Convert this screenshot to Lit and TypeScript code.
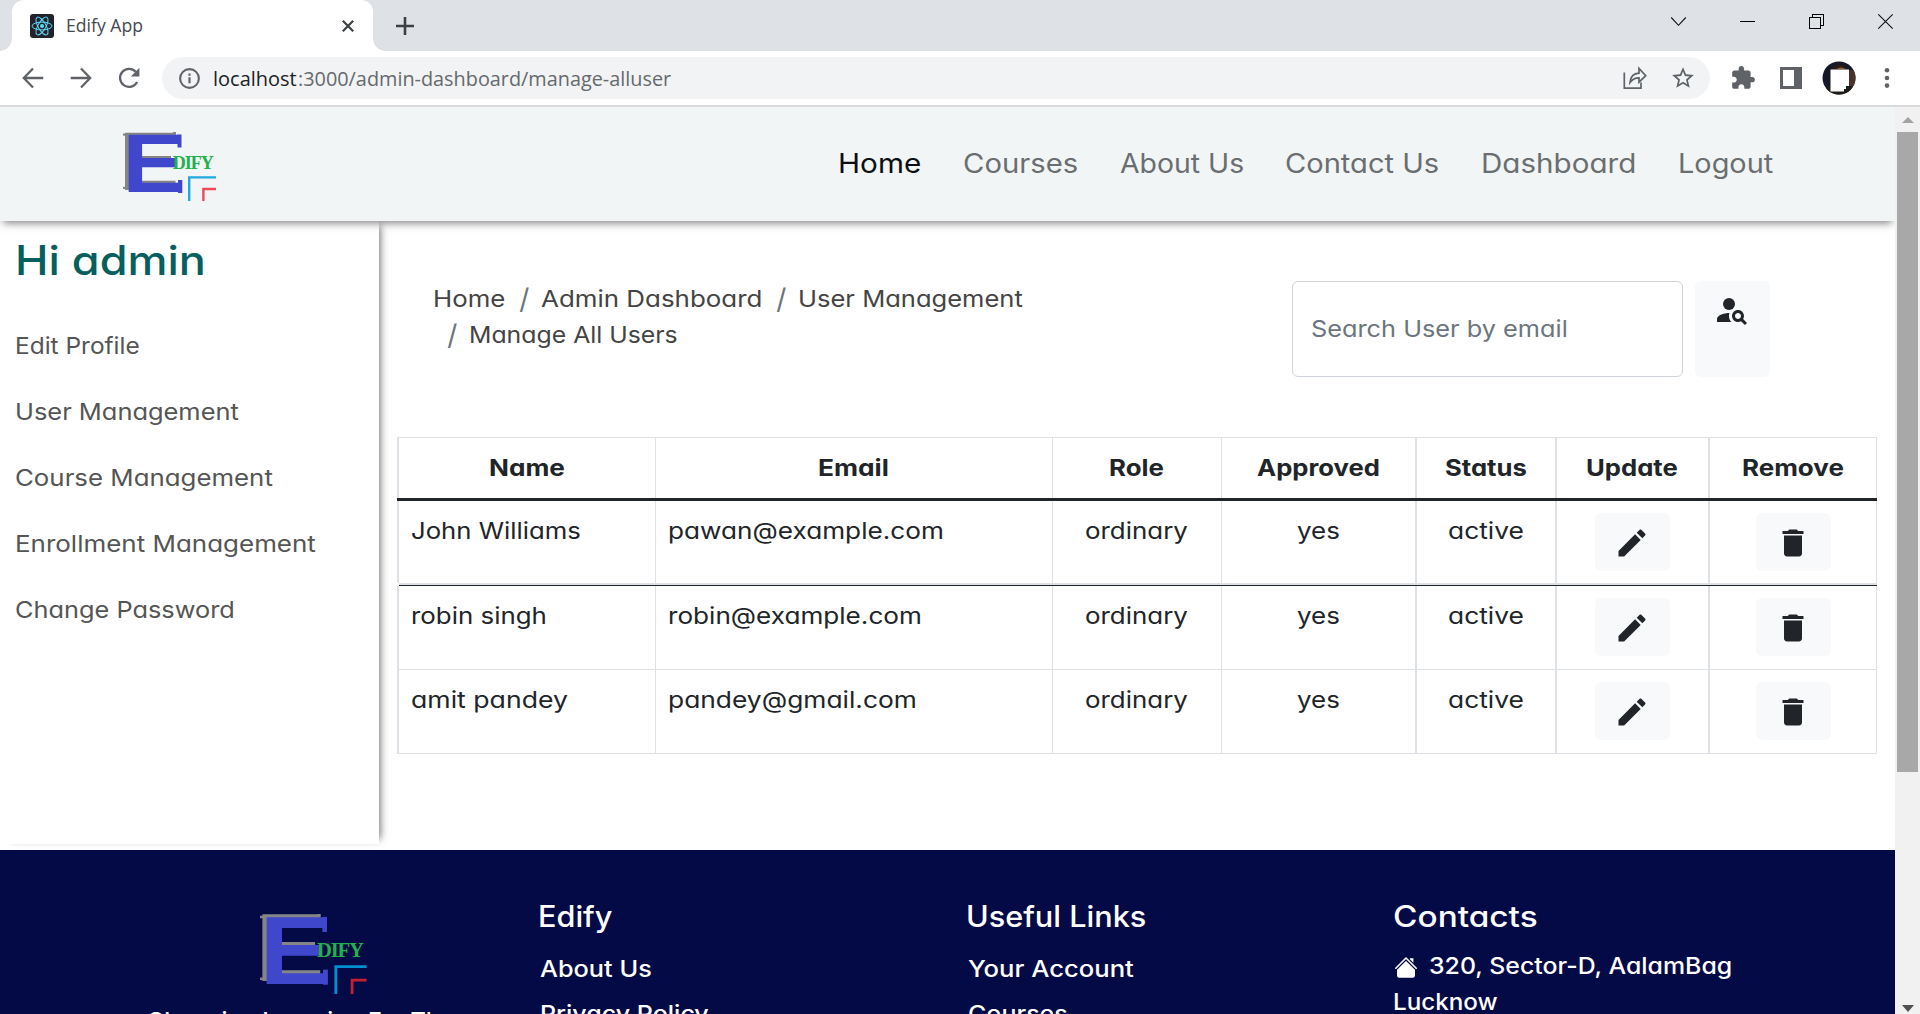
import { LitElement, html, css, svg, nothing } from "lit";
import { customElement, property } from "lit/decorators.js";

/** A single line of text widened (or narrowed) so that its ink fills `w` pixels. */
@customElement("fit-text")
class FitText extends LitElement {
  @property({ type: Number }) w = 0;
  @property() text = "";

  static styles = css`
    :host { display: inline-block; white-space: pre; flex: none; }
    .ink { display: inline-block; transform-origin: 0 50%; margin-left: -0.06em; }
  `;

  render() {
    return html`<span class="ink">${this.text}</span>`;
  }

  updated() {
    const span = this.renderRoot.querySelector(".ink") as HTMLElement;
    this.style.width = `${this.w}px`;
    span.style.transform = "none";
    const em = parseFloat(getComputedStyle(span).fontSize);
    const natural = span.getBoundingClientRect().width;
    if (this.text.length > 1) {
      span.style.transform = `scaleX(${(this.w - 1) / (natural - 0.11 * em)})`;
    }
  }
}

/** The Edify logo: a shadowed E with slab ends, the rest of the name and two corner marks. */
@customElement("edify-logo")
class EdifyLogo extends LitElement {
  static styles = css`
    :host { display: block; --sky: #1fa9e1; --rose: #ee4b55; }
    .art { display: block; width: 100%; height: 100%; overflow: visible; }
    .letter { font: bold 83px "Liberation Sans", sans-serif; }
    .back { fill: #858585; }
    .front { fill: #3f48cc; }
    .rest { font: bold 18px "Liberation Serif", serif; fill: #22b14c; }
    .sky { fill: none; stroke: var(--sky); stroke-width: 2.4; }
    .rose { fill: none; stroke: var(--rose); stroke-width: 2.4; }
  `;
  render() {
    return html`<svg class="art" viewBox="0 0 93 69" preserveAspectRatio="none">
      <text class="letter back" x="-4" y="57.5" textLength="60" lengthAdjust="spacingAndGlyphs">E</text>
      <rect class="back" x="0" y="1.5" width="5" height="2.2" />
      <rect class="back" x="0" y="54.8" width="5" height="2.2" />
      <rect class="back" x="50" y="0" width="3" height="4" />
      <text class="letter front" x="-0.5" y="60" textLength="62" lengthAdjust="spacingAndGlyphs">E</text>
      <rect class="front" x="54.5" y="2.5" width="4" height="13" />
      <rect class="front" x="55" y="48" width="4.3" height="13" />
      <text class="rest" x="49.7" y="36.7" textLength="41" lengthAdjust="spacing">DIFY</text>
      <path class="sky" d="M66.2 69V45.4H93" />
      <path class="rose" d="M80.4 69V57H93" />
    </svg>`;
  }
}

const strokeIcon = (size: number, body: unknown) =>
  html`<svg class="stroke" width=${size} height=${size} viewBox="0 0 24 24">${body}</svg>`;

@customElement("browser-bar")
class BrowserBar extends LitElement {
  static styles = css`
    :host { display: block; flex: none; font-family: "Open Sans", "Noto Sans", sans-serif; color: #3c4043; }
    svg { display: block; flex: none; overflow: visible; }
    .strip { display: flex; height: 51px; background: #dee1e6; padding-left: 12px; }
    .tab { position: relative; box-sizing: border-box; width: 361px; height: 51px; background: #fff;
      border-radius: 12px 12px 0 0; display: flex; align-items: center; padding: 1px 19px 0 18px; }
    .flare { position: absolute; bottom: 0; width: 12px; height: 12px; }
    .flare.left { left: -12px; background: radial-gradient(circle at 0 0, transparent 11.5px, #fff 12px); }
    .flare.right { right: -12px; background: radial-gradient(circle at 100% 0, transparent 11.5px, #fff 12px); }
    .title { font-size: 18.5px; line-height: 26px; margin-left: 13px; flex: 1; padding-bottom: 2px; color: #45484d; }
    .plus { margin: 17px 0 0 23px; }
    .controls { margin-left: auto; display: flex; gap: 54px; padding: 14px 27px 0 0; }
    .thin { fill: none; stroke: #000; stroke-width: 1; shape-rendering: crispEdges; }
    .diag { fill: none; stroke: #111; stroke-width: 1.1; }
    .tools { display: flex; align-items: center; height: 54px; background: #fff; border-bottom: 2px solid #d9dadc;
      box-sizing: content-box; padding-left: 20px; }
    .stroke { fill: none; stroke: #5f6368; stroke-width: 2.1; }
    .arrows { display: flex; gap: 22px; width: 142px; }
    .omni { width: 1548px; height: 42px; box-sizing: border-box; border-radius: 21px; background: #f1f3f4;
      display: flex; align-items: center; padding: 0 14px 0 15px; }
    .url { font-size: 20.5px; line-height: 28px; margin-left: 12.5px; color: #66696d; flex: 1; display: flex; gap: 2px; }
    .host { color: #202124; }
    .omni-icons { display: flex; gap: 23px; align-items: center; }
    .right { display: flex; align-items: center; margin-left: 20px; }
    .side { margin-left: 24px; }
    .face { margin-left: 20px; }
    .more { margin-left: 28px; }
  `;
  render() {
    return html`
      <div class="strip">
        <div class="tab">
          <span class="flare left"></span><span class="flare right"></span>
          <svg width="24" height="24" viewBox="0 0 24 24">
            <rect width="24" height="24" rx="3" fill="#20232a" />
            <g fill="none" stroke="#61dafb" stroke-width="1">
              <ellipse cx="12" cy="12" rx="10" ry="3.9" />
              <ellipse cx="12" cy="12" rx="10" ry="3.9" transform="rotate(60 12 12)" />
              <ellipse cx="12" cy="12" rx="10" ry="3.9" transform="rotate(120 12 12)" />
            </g>
            <circle cx="12" cy="12" r="2" fill="#61dafb" />
          </svg>
          <div class="title"><fit-text .w=${76} .text=${"Edify App"}></fit-text></div>
          <svg width="12" height="12" viewBox="0 0 12 12"><path d="M.8.8L11.2 11.2M11.2.8L.8 11.2" stroke="#3c4043" stroke-width="2.2" /></svg>
        </div>
        <svg class="plus" width="18" height="18" viewBox="0 0 18 18"><path d="M9 0v18M0 9h18" stroke="#3c4043" stroke-width="2.6" /></svg>
        <div class="controls">
          <svg width="16" height="15" viewBox="0 0 16 15"><path class="diag" d="M1.2 3.5L8.5 11.3L15.8 3.5" /></svg>
          <svg width="15" height="15" viewBox="0 0 15 15"><path class="thin" d="M0 7.5H15" /></svg>
          <svg width="15" height="15" viewBox="0 0 15 15"><path class="thin" d="M.5 3.5h11v11h-11zM3.5 3.5V.5h11v11h-3" /></svg>
          <svg width="15" height="15" viewBox="0 0 15 15"><path class="diag" d="M.3.3L14.7 14.7M14.7.3L.3 14.7" /></svg>
        </div>
      </div>
      <div class="tools">
        <div class="arrows">
          ${strokeIcon(26, svg`<path d="M21.5 12H4M12 3.3L3.5 12L12 20.7" />`)}
          ${strokeIcon(26, svg`<path d="M2.5 12H20M12 3.3L20.5 12L12 20.7" />`)}
          ${strokeIcon(26, svg`<path d="M19.5 15.6A8.3 8.3 0 1 1 18.2 6.3" /><path d="M21.6 2.6V10.5H13.7z" fill="#5f6368" stroke="none" />`)}
        </div>
        <div class="omni">
          ${strokeIcon(25, svg`<circle cx="12" cy="12" r="9" stroke-width="2" /><path d="M12 10.8v5.7M12 7.2v2.1" stroke-width="2.1" />`)}
          <div class="url">
            <fit-text class="host" .w=${82.5} .text=${"localhost"}></fit-text><fit-text .w=${372} .text=${":3000/admin-dashboard/manage-alluser"}></fit-text>
          </div>
          <div class="omni-icons">
            <svg width="24" height="24" viewBox="0 0 24 24"><path d="M1.3 6.5V22.2H18V16.5M7 16.5C7.5 10.5 10.5 7.5 16 7.2V2.5L22.7 9.7L16 16.2V11.9C12 11.9 9.5 13 7 16.5z" fill="none" stroke="#5f6368" stroke-width="1.7" /></svg>
            <svg width="26" height="26" viewBox="0 0 24 24"><path fill="#5f6368" d="M22 9.24l-7.19-.62L12 2 9.19 8.63 2 9.24l5.46 4.73L5.82 21 12 17.27 18.18 21l-1.63-7.03L22 9.24zM12 15.4l-3.76 2.27 1-4.28-3.32-2.88 4.38-.38L12 6.1l1.71 4.04 4.38.38-3.32 2.88 1 4.28L12 15.4z" /></svg>
          </div>
        </div>
        <div class="right">
          <svg width="26" height="26" viewBox="0 0 24 24"><path fill="#5f6368" d="M20.5 11H19V7c0-1.1-.9-2-2-2h-4V3.5C13 2.12 11.88 1 10.5 1S8 2.12 8 3.5V5H4c-1.1 0-1.99.9-1.99 2v3.8H3.5c1.49 0 2.7 1.21 2.7 2.7s-1.21 2.7-2.7 2.7H2V20c0 1.1.9 2 2 2h3.8v-1.5c0-1.49 1.21-2.7 2.7-2.7 1.49 0 2.7 1.21 2.7 2.7V22H17c1.1 0 2-.9 2-2v-4h1.5c1.38 0 2.5-1.12 2.5-2.5S21.88 11 20.5 11z" /></svg>
          <svg class="side" width="22" height="22" viewBox="0 0 22 22"><path fill="#5f6368" fill-rule="evenodd" d="M0 0H22V22H0zM3 3V19H14V3z" /></svg>
          <svg class="face" width="34" height="34" viewBox="0 0 34 34">
            <clipPath id="disc"><circle cx="17" cy="17" r="16.5" /></clipPath>
            <g clip-path="url(#disc)">
              <rect width="34" height="34" fill="#151826" />
              <path d="M11 8C12 3 22 2 25 7V10H11z" fill="#2b1a14" />
              <path d="M15 8c2-2 6-2 8 0z" fill="#8a5a41" />
              <path d="M27 9h7v16h-9z" fill="#4a332b" />
              <path d="M4 26H32V34H4z" fill="#1f1c17" />
              <path d="M8.5 8.5H27V25H24V28H22V30.5H8.5z" fill="#fff" />
            </g>
          </svg>
          <svg class="more" width="6" height="22" viewBox="0 0 6 22"><g fill="#5f6368"><circle cx="3" cy="3.2" r="2.3" /><circle cx="3" cy="11" r="2.3" /><circle cx="3" cy="18.6" r="2.3" /></g></svg>
        </div>
      </div>
    `;
  }
}

interface Link { text: string; w: number; }
interface User { name: Link; email: Link; }

const NAV: Link[] = [
  { text: "Home", w: 81 }, { text: "Courses", w: 113 }, { text: "About Us", w: 122 },
  { text: "Contact Us", w: 152 }, { text: "Dashboard", w: 153 }, { text: "Logout", w: 93 },
];
const SIDE: Link[] = [
  { text: "Edit Profile", w: 123 }, { text: "User Management", w: 222 }, { text: "Course Management", w: 256 },
  { text: "Enrollment Management", w: 299 }, { text: "Change Password", w: 218 },
];
const HEAD: Link[] = [
  { text: "Name", w: 74 }, { text: "Email", w: 69 }, { text: "Role", w: 53 }, { text: "Approved", w: 121 },
  { text: "Status", w: 80 }, { text: "Update", w: 90 }, { text: "Remove", w: 100 },
];
const USERS: User[] = [
  { name: { text: "John Williams", w: 168 }, email: { text: "pawan@example.com", w: 274 } },
  { name: { text: "robin singh", w: 134 }, email: { text: "robin@example.com", w: 252 } },
  { name: { text: "amit pandey", w: 155 }, email: { text: "pandey@gmail.com", w: 247 } },
];

const fit = (l: Link, cls = "") => html`<fit-text class=${cls || nothing} .w=${l.w} .text=${l.text}></fit-text>`;

const PENCIL = svg`<path d="M3 17.25V21h3.75L17.81 9.94l-3.75-3.75L3 17.25zM20.71 7.04c.39-.39.39-1.02 0-1.41l-2.34-2.34c-.39-.39-1.02-.39-1.41 0l-1.83 1.83 3.75 3.75 1.83-1.83z" />`;
const TRASH = svg`<path d="M6 19c0 1.1.9 2 2 2h8c1.1 0 2-.9 2-2V7H6v12zM19 4h-3.5l-1-1h-5l-1 1H5v2h14V4z" />`;
const PERSON = svg`<circle cx="10" cy="8" r="4" /><path d="M10.35 14.01C7.62 13.91 2 15.27 2 18v2h9.54c-2.47-2.76-1.23-5.89-1.19-5.99zM19.43 18.02c.36-.59.57-1.28.57-2.02 0-2.21-1.79-4-4-4s-4 1.79-4 4 1.79 4 4 4c.74 0 1.43-.22 2.02-.57L20.59 22 22 20.59l-2.57-2.57zM16 18c-1.1 0-2-.9-2-2s.9-2 2-2 2 .9 2 2-.9 2-2 2z" />`;

const iconButton = (label: string, shape: unknown) => html`
  <button class="btn" aria-label=${label}><svg width="36" height="36" viewBox="0 0 24 24">${shape}</svg></button>`;

@customElement("app-root")
class AppRoot extends LitElement {
  static styles = css`
    :host { display: flex; flex-direction: column; width: 1920px; height: 1014px; overflow: hidden; background: #fff;
      font-family: Inter, "Open Sans", sans-serif; font-feature-settings: "cv11"; font-optical-sizing: none; font-size: 23px; color: #212529; }
    svg { display: block; }
    .view { display: flex; flex: 1; min-height: 0; }
    .page { display: flex; flex-direction: column; width: 1895px; height: 907px; overflow: hidden; }

    .nav { position: relative; z-index: 1; flex: none; box-sizing: border-box; height: 114px; display: flex; align-items: center; justify-content: space-between;
      background: #f1f5f6; padding: 0 122.5px 0 123px; box-shadow: 0 5px 8px -3px rgba(0, 0, 0, 0.5); }
    .nav-logo { width: 93px; height: 69px; margin-top: 5px; }
    .nav-links { display: flex; gap: 43.8px; font-size: 26.5px; line-height: 40px; color: #6b6e70; padding-bottom: 3px; }
    .nav-links .on { color: #0d0f10; }

    .body { display: flex; height: 629px; flex: none; }
    .side { box-sizing: border-box; width: 379px; margin-right: 1px; height: 623px; padding: 16px 0 0 16px; flex: none;
      box-shadow: 6px 0 8px -5px rgba(0, 0, 0, 0.6); display: flex; flex-direction: column; align-items: flex-start; }
    .hello { margin: 0 0 28px 1px; font-size: 40.5px; line-height: 48px; font-weight: 450; color: #075e5e; height: 48px; }
    .side-link { line-height: 66px; height: 66px; color: #555; }

    .main { flex: 1; display: flex; flex-direction: column; padding: 60px 18px 0 17px; }
    .top { display: flex; justify-content: space-between; height: 96px; padding: 0 107px 0 37px; margin-bottom: 60px; }
    .crumbs { line-height: 36px; color: #444; }
    .crumb-row { display: flex; gap: 14.5px; height: 36px; }
    .crumb-row.wrapped { padding-left: 13px; }
    .sep { font-size: 28px; color: #6c757d; text-indent: 1px; }
    .search { display: flex; gap: 12px; }
    .field { box-sizing: border-box; width: 391px; height: 96px; border: 1px solid #ced4da; border-radius: 6px;
      display: flex; align-items: center; padding-left: 19px; color: #6c757d; }
    .btn { box-sizing: border-box; width: 75px; height: 58px; border: 0; border-radius: 6px; background: #f8f9fa;
      padding: 12px 0 0 19px; margin: 0; display: flex; align-items: flex-start; }
    .btn svg { fill: #212529; flex: none; }
    .search .btn { height: 96px; padding: 11px 0 0 18.5px; }

    .table { display: flex; flex-direction: column; width: 1480px; box-sizing: border-box; border-top: 1px solid #dee2e6; border-bottom: 1px solid #dee2e6; }
    .row { display: grid; grid-template-columns: 258px 397px 169px 194px 140px 153px 169px; height: 83px; }
    .row.head { height: 60px; font-weight: 650; line-height: 61px; }
    .row.first { height: 82px; }
    .cell { box-sizing: border-box; border-left: 1px solid #dee2e6; padding-left: 13px; line-height: 61px; }
    .cell.wide { border-left-width: 2px; }
    .cell.last { border-right: 1px solid #dee2e6; }
    .cell.mid { display: flex; justify-content: center; padding-left: 0; }
    .cell .btn { margin-top: 12px; }
    .rule { height: 3px; background: #212529; flex: none; }
    .rule-soft { height: 2px; background: #dee2e6; border-bottom: 1px solid #212529; flex: none; margin-left: 2px; }
    .rule-thin { height: 1px; background: #dee2e6; flex: none; }

    .footer { display: grid; grid-template-columns: 539.5px 428px 427px 1fr; flex: 1; min-height: 0; background: #040a46; color: #fff; font-weight: 500; overflow: hidden; }
    .brand { padding-top: 64px; }
    .foot-logo { width: 106.5px; height: 80px; margin-left: 259.5px; --sky: #0090d2; --rose: #c8202f; }
    .tagline { margin: 11px 0 0 148px; line-height: 32px; }
    .col { padding-top: 46px; }
    .col-title { margin: 0; font-size: 29.5px; font-weight: 500; line-height: 40px; height: 40px; }
    .links { margin: 10.5px 0 0 2.2px; line-height: 45px; display: flex; flex-direction: column; }
    .links fit-text { height: 45px; }
    .address { margin-top: 11.5px; line-height: 36px; }
    .address-line { display: flex; height: 36px; gap: 14px; }
    .house { margin-top: 9px; }

    .scroll { width: 25px; height: 907px; background: #f1f1f1; display: flex; flex-direction: column; align-items: center; box-sizing: border-box; padding: 10px 0 2px; }
    .thumb { width: 21px; height: 640px; background: #a8a8a8; margin-top: 9px; }
    .down { margin-top: auto; }
  `;

  render() {
    return html`
      <browser-bar></browser-bar>
      <div class="view">
        <div class="page">
          <nav class="nav">
            <edify-logo class="nav-logo"></edify-logo>
            <div class="nav-links">${NAV.map((l, i) => fit(l, i === 0 ? "on" : ""))}</div>
          </nav>
          <div class="body">
            <aside class="side">
              <h1 class="hello">${fit({ text: "Hi admin", w: 187 })}</h1>
              ${SIDE.map((l) => fit(l, "side-link"))}
            </aside>
            <main class="main">
              <div class="top">
                <div class="crumbs">
                  <div class="crumb-row">
                    ${fit({ text: "Home", w: 70.5 })}${fit({ text: "/", w: 8.5 }, "sep")}
                    ${fit({ text: "Admin Dashboard", w: 219.5 })}${fit({ text: "/", w: 8.5 }, "sep")}
                    ${fit({ text: "User Management", w: 223 })}
                  </div>
                  <div class="crumb-row wrapped">
                    ${fit({ text: "/", w: 9 }, "sep")}${fit({ text: "Manage All Users", w: 207 })}
                  </div>
                </div>
                <div class="search">
                  <div class="field">${fit({ text: "Search User by email", w: 255 })}</div>
                  ${iconButton("Search user", PERSON)}
                </div>
              </div>
              <div class="table">
                <div class="row head">
                  ${HEAD.map((l, i) => html`<div class="cell mid ${i === 0 || i > 3 ? "wide" : ""} ${i === 6 ? "last" : ""}">${fit(l)}</div>`)}
                </div>
                <div class="rule"></div>
                ${USERS.map((u, i) => html`
                  <div class="row ${i === 0 ? "first" : ""}">
                    <div class="cell wide">${fit(u.name)}</div>
                    <div class="cell">${fit(u.email)}</div>
                    <div class="cell mid">${fit({ text: "ordinary", w: 101 })}</div>
                    <div class="cell mid">${fit({ text: "yes", w: 41 })}</div>
                    <div class="cell mid wide">${fit({ text: "active", w: 74 })}</div>
                    <div class="cell mid wide">${iconButton("Update", PENCIL)}</div>
                    <div class="cell mid wide last">${iconButton("Remove", TRASH)}</div>
                  </div>
                  ${i === 0 ? html`<div class="rule-soft"></div>` : i === 1 ? html`<div class="rule-thin"></div>` : nothing}
                `)}
              </div>
            </main>
          </div>
          <footer class="footer">
            <div class="brand">
              <edify-logo class="foot-logo"></edify-logo>
              <div class="tagline">${fit({ text: "Changing Learning For The", w: 305 })}</div>
            </div>
            <div class="col">
              <h2 class="col-title">${fit({ text: "Edify", w: 72 })}</h2>
              <div class="links">${fit({ text: "About Us", w: 110 })}${fit({ text: "Privacy Policy", w: 167 })}</div>
            </div>
            <div class="col">
              <h2 class="col-title">${fit({ text: "Useful Links", w: 178 })}</h2>
              <div class="links">${fit({ text: "Your Account", w: 164 })}${fit({ text: "Courses", w: 98 })}</div>
            </div>
            <div class="col">
              <h2 class="col-title">${fit({ text: "Contacts", w: 142 })}</h2>
              <div class="address">
                <div class="address-line">
                  <svg class="house" width="22" height="21" viewBox="0 0 22 21">
                    <path d="M14.8 1.2h3.6v6.5l-3.6-3.6z" fill="#fff" />
                    <path d="M11 3.8L20 12.5V18.5a2.3 2.3 0 0 1-2.3 2.3H4.3A2.3 2.3 0 0 1 2 18.5V12.5z" fill="#fff" />
                    <path d="M.8 11.2L11 1L21.2 11.2" fill="none" stroke="#040a46" stroke-width="3.8" />
                    <path d="M.8 11.2L11 1L21.2 11.2" fill="none" stroke="#fff" stroke-width="1.6" stroke-linejoin="round" stroke-linecap="round" />
                  </svg>
                  ${fit({ text: "320, Sector-D, AalamBag", w: 301.5 })}
                </div>
                ${fit({ text: "Lucknow", w: 103 })}
              </div>
            </div>
          </footer>
        </div>
        <div class="scroll">
          <svg width="12" height="6" viewBox="0 0 12 6"><path d="M0 6L6 0L12 6z" fill="#a3a3a3" /></svg>
          <div class="thumb"></div>
          <svg class="down" width="12" height="7" viewBox="0 0 12 7"><path d="M0 0H12L6 7z" fill="#505050" /></svg>
        </div>
      </div>
    `;
  }
}
